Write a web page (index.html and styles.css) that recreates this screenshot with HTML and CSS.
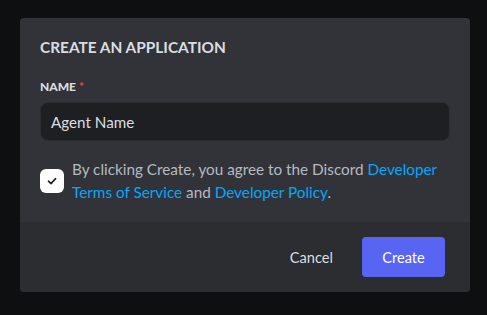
FILE: index.html
```html
<!DOCTYPE html>
<html>
<head>
<meta charset="utf-8">
<link rel="stylesheet" href="styles.css">
</head>
<body>
<div class="modal">
  <div class="body">
    <h1 class="title">Create an Application</h1>
    <label class="label">Name <span class="req">*</span></label>
    <div class="input">Agent Name</div>
    <div class="agree">
      <div class="check">
        <svg width="12" height="12" viewBox="0 0 12 12"><path d="M2.5 6.2 L5 8.6 L9.6 3.6" fill="none" stroke="#1e1f22" stroke-width="1.6" stroke-linecap="round" stroke-linejoin="round"/></svg>
      </div>
      <p class="agree-text">By clicking Create, you agree to the Discord <a>Developer Terms of Service</a> and <a>Developer Policy</a>.</p>
    </div>
  </div>
  <div class="footer">
    <button class="cancel">Cancel</button>
    <button class="create">Create</button>
  </div>
</div>
</body>
</html>
```

FILE: styles.css
```css
html, body {
  margin: 0;
  padding: 0;
  background: #0e0f11;
  width: 487px;
  height: 315px;
  overflow: hidden;
}
body {
  font-family: "Lato", sans-serif;
  padding: 18px 17px 0 20px;
  box-sizing: border-box;
}
.modal {
  width: 450px;
  background: #313338;
  border-radius: 4px;
  overflow: hidden;
}
.body {
  padding: 20px 20px 18px 20px;
}
.title {
  margin: 0;
  font-size: 15.4px;
  font-weight: 700;
  text-transform: uppercase;
  color: #dbdee1;
  line-height: 18px;
}
.label {
  display: block;
  margin-top: 24px;
  font-size: 12px;
  font-weight: 900;
  text-transform: uppercase;
  color: #dbdee1;
  line-height: 14px;
}
.req { color: #f23f42; }
.input {
  margin-top: 8px;
  height: 39px;
  box-sizing: border-box;
  border: 1px solid #2b2d31;
  background: #1e1f22;
  border-radius: 8px;
  padding: 0 10px;
  display: flex;
  align-items: center;
  font-size: 15.2px;
  color: #dbdee1;
}
.agree {
  margin-top: 17px;
  display: flex;
  align-items: center;
  gap: 8px;
}
.check {
  width: 24px;
  height: 24px;
  flex: none;
  background: #fff;
  border-radius: 6px;
  display: flex;
  align-items: center;
  justify-content: center;
}
.agree-text {
  margin: 0;
  font-size: 15.3px;
  line-height: 23px;
  color: #b5bac1;
}
.agree-text a { color: #00a8fc; }
.footer {
  background: #2b2d31;
  height: 70px;
  display: flex;
  justify-content: flex-end;
  align-items: center;
  padding: 0 25px 0 0;
}
button {
  font-family: inherit;
  font-size: 14.6px;
  border: 0;
  cursor: pointer;
}
.cancel {
  background: none;
  color: #dbdee1;
  padding: 0 29px 0 0;
  height: 38px;
}
.create {
  background: #5865f2;
  color: #fff;
  border-radius: 4px;
  width: 83px;
  height: 40px;
}
```
